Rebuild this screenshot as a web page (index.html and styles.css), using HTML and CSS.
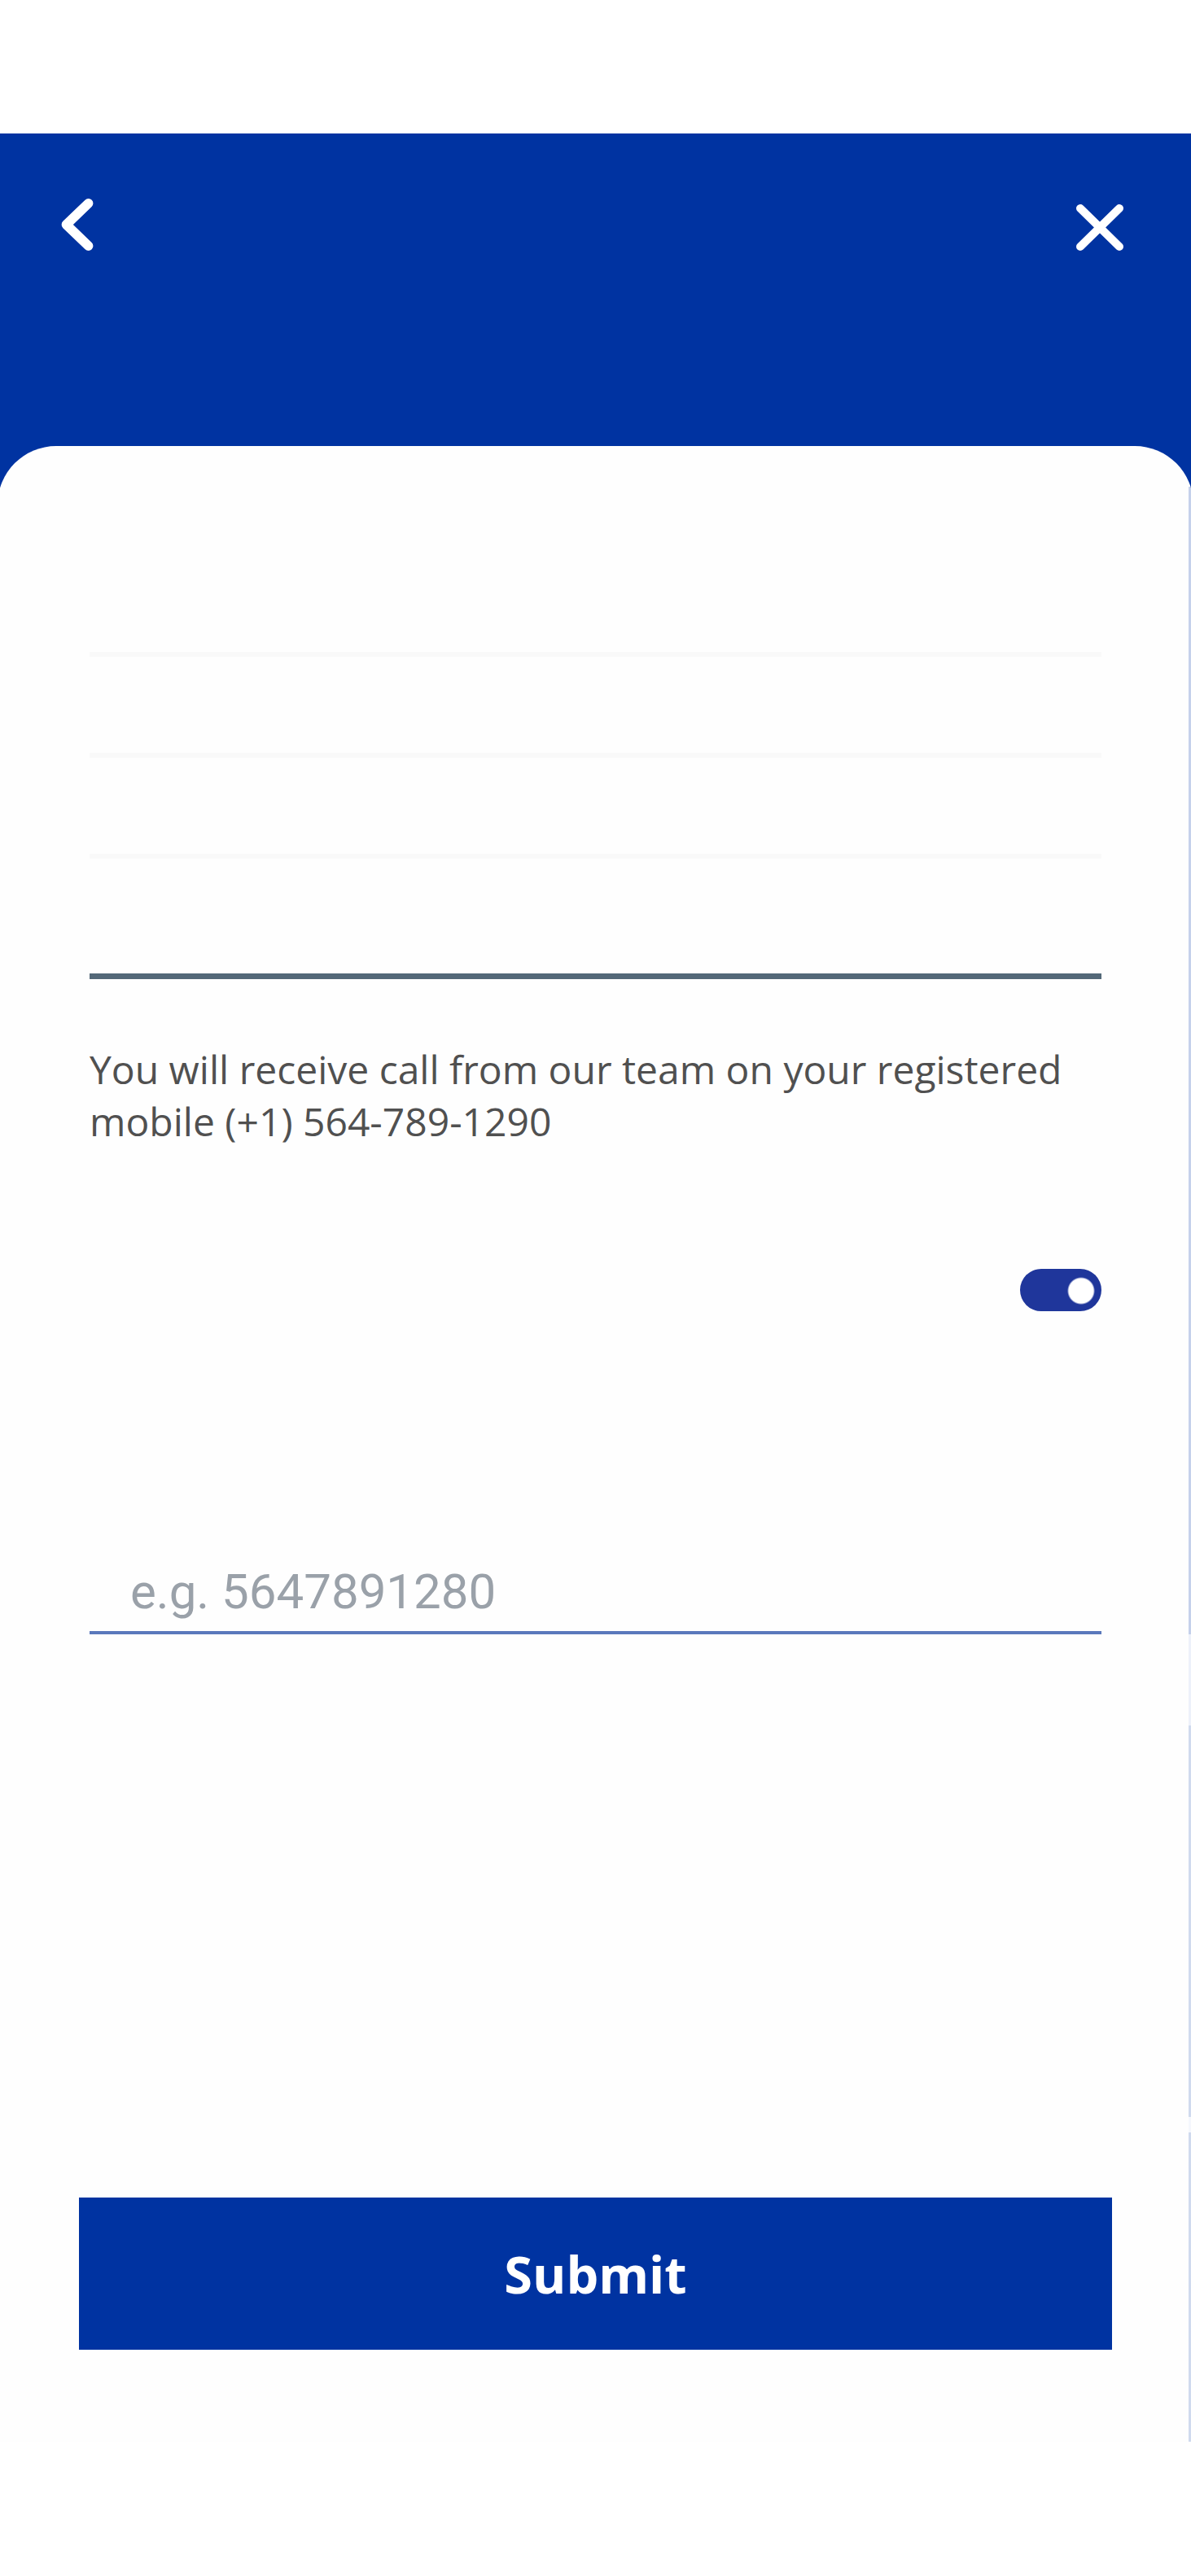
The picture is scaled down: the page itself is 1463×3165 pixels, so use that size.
FILE: index.html
```html
<!DOCTYPE html>
<html lang="en">
<head>
<meta charset="utf-8">
<meta name="viewport" content="width=device-width, initial-scale=1">
<title>Request a call</title>
<link rel="stylesheet" href="styles.css">
</head>
<body>
<div class="screen">
  <header class="topbar">
    <button class="icon-button" type="button" aria-label="Back">
      <svg class="icon-back" viewBox="0 0 40 66" aria-hidden="true"><path d="M34 6 L6 33 L34 60"/></svg>
    </button>
    <button class="icon-button" type="button" aria-label="Close">
      <svg class="icon-close" viewBox="0 0 60 58" aria-hidden="true"><path d="M6 5 L54 52 M54 5 L6 52"/></svg>
    </button>
  </header>
  <main class="sheet">
    <form class="form">
      <ul class="rows">
        <li class="row"></li>
        <li class="row"></li>
        <li class="row"></li>
        <li class="row row-strong"></li>
      </ul>
      <p class="note">You will receive call from our team on your registered mobile (+1) 564-789-1290</p>
      <input class="switch" type="checkbox" role="switch" aria-label="Use another number" checked>
      <input class="phone" type="tel" aria-label="Phone number" placeholder="e.g. 5647891280">
      <button class="submit" type="submit">Submit</button>
    </form>
  </main>
</div>
</body>
</html>
```
FILE: styles.css
```css
* { box-sizing: border-box; }

body {
  margin: 0;
  background: #fff;
  font-family: "Open Sans", "Noto Sans", sans-serif;
}

.screen {
  padding: 164px 0;
  overflow: hidden;
}

.topbar {
  display: flex;
  justify-content: space-between;
  align-items: flex-start;
  height: 484px;
  margin-bottom: -100px;
  padding: 76px 78px 0 71px;
  background: #0033a1;
}

.icon-button {
  display: flex;
  padding: 4px;
  border: 0;
  background: none;
}

.icon-button svg {
  fill: none;
  stroke: #fff;
  stroke-linecap: round;
  stroke-linejoin: round;
}

.icon-back { width: 40px; height: 64px; stroke-width: 12px; }
.icon-close { width: 60px; height: 72px; stroke-width: 10px; }

.sheet {
  margin: 0 -3px;
  padding: 135px 113px 113px;
  border-radius: 72px 72px 0 0;
  background:
    linear-gradient(#c5d1eb 1410px, #edf1fa 1410px 1522px, #d0daee 1522px 2003px, #f5f7fd 2003px 2022px, #d0daee 2022px) right 3px top 50px / 3px 100% no-repeat,
    #fefefe;
}

.form {
  display: flex;
  flex-direction: column;
}

.rows {
  margin: 0;
  padding: 0;
  list-style: none;
}

.row {
  height: 124px;
  border-bottom: 6px solid #f9f9f9;
}

.row-strong {
  height: 148px;
  border-bottom: 7px solid #536878;
}

.note {
  margin: 79px 0 149px;
  color: #505050;
  font-size: 48px;
  line-height: 64px;
}

.switch {
  appearance: none;
  align-self: flex-end;
  width: 100px;
  height: 52px;
  margin: 0;
  border-radius: 26px;
  background: radial-gradient(circle at 75px 27px, #fff 15px, #1f369b 17px);
}

.phone {
  width: 100%;
  height: 100px;
  margin: 297px 0 0;
  padding: 0 50px 2px;
  border: 0;
  border-bottom: 4px solid #5a78bc;
  border-radius: 0;
  background: none;
  font-family: Roboto, sans-serif;
  font-size: 60px;
  outline: 0;
}

.phone::placeholder { color: #9aa1a9; opacity: 1; }

.submit {
  height: 187px;
  margin: 692px -13px 0;
  border: 0;
  background: #0033a1;
  color: #fff;
  font-family: inherit;
  font-size: 63px;
  font-weight: 700;
}
```
